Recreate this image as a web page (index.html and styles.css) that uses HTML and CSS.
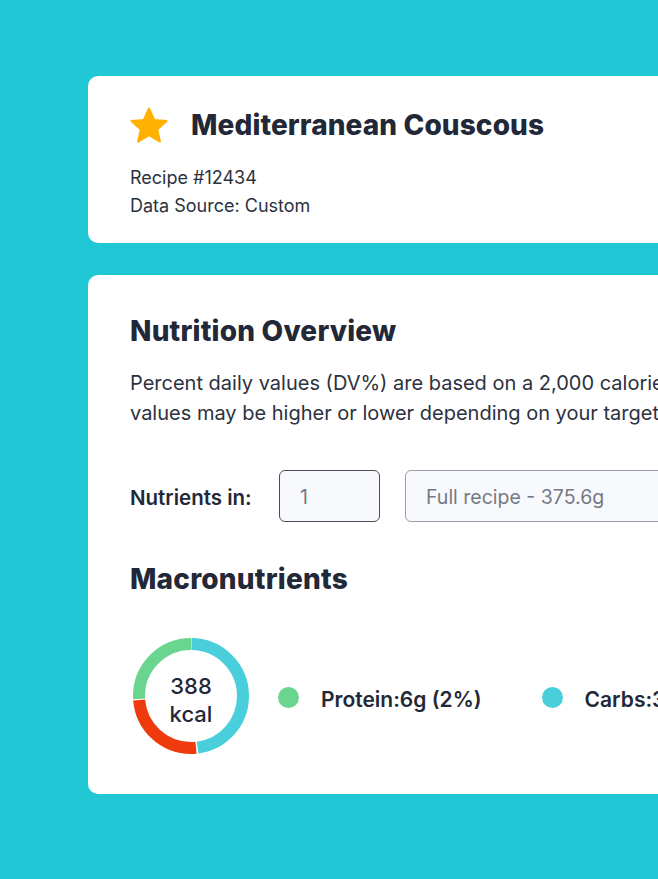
FILE: index.html
```html
<!DOCTYPE html>
<html lang="en">
<head>
<meta charset="utf-8">
<title>Mediterranean Couscous</title>
<link rel="stylesheet" href="styles.css">
</head>
<body>
<main class="stage">
  <section class="card card-header">
    <div class="title-row">
      <svg class="star" viewBox="0 0 40 40" width="40" height="40" aria-hidden="true">
        <path d="M20 2.5 L25.2 14 L37.6 15.1 L28.2 23.4 L31 35.6 L20 29.2 L9 35.6 L11.8 23.4 L2.4 15.1 L14.8 14 Z" fill="#FFB000" stroke="#FFB000" stroke-width="2" stroke-linejoin="round"/>
      </svg>
      <h1 class="title">Mediterranean Couscous</h1>
    </div>
    <p class="meta">Recipe #12434</p>
    <p class="meta">Data Source: Custom</p>
  </section>

  <section class="card card-nutrition">
    <h2 class="heading">Nutrition Overview</h2>
    <p class="desc">
      <span class="line">Percent daily values (DV%) are based on a 2,000 calorie</span>
      <span class="line">values may be higher or lower depending on your target</span>
    </p>
    <div class="nutrients-row">
      <span class="label">Nutrients in:</span>
      <div class="field field-qty">1</div>
      <div class="field field-unit">Full recipe - 375.6g</div>
    </div>
    <h2 class="heading heading-macro">Macronutrients</h2>
    <div class="macro-row">
      <div class="donut">
        <svg viewBox="0 0 116 116" width="116" height="116" aria-hidden="true">
          <g transform="rotate(-90 58 58)" fill="none" stroke-width="12">
            <circle cx="58" cy="58" r="52" stroke="#48CFDB" stroke-dasharray="156 170.7" stroke-dashoffset="-0.5"/>
            <circle cx="58" cy="58" r="52" stroke="#EE3A0C" stroke-dasharray="82.5 244.2" stroke-dashoffset="-158"/>
            <circle cx="58" cy="58" r="52" stroke="#6AD58E" stroke-dasharray="84.5 242.2" stroke-dashoffset="-241.7"/>
          </g>
        </svg>
        <div class="donut-label"><span>388</span><span>kcal</span></div>
      </div>
      <div class="legend-item">
        <span class="dot dot-green"></span>
        <span class="legend-text">Protein:6g (2%)</span>
      </div>
      <div class="legend-item">
        <span class="dot dot-teal"></span>
        <span class="legend-text">Carbs:36g</span>
      </div>
    </div>
  </section>
</main>
</body>
</html>
```

FILE: styles.css
```css
html, body {
  margin: 0;
  padding: 0;
}
body {
  background: #20C8D6;
  font-family: Inter, "Noto Sans", sans-serif;
  color: #232838;
  width: 658px;
  height: 879px;
  overflow: hidden;
}
.stage {
  padding: 76px 0 0 88px;
  display: flex;
  flex-direction: column;
  gap: 32px;
}
.card {
  background: #ffffff;
  border-radius: 10px;
  width: 760px;
  box-sizing: border-box;
  padding-left: 42px;
}
.card-header {
  height: 167px;
  padding-top: 30px;
}
.title-row {
  display: flex;
  align-items: center;
  gap: 22px;
  height: 40px;
  margin-left: -1px;
}
.star {
  display: block;
  flex: none;
}
.title {
  margin: -3px 0 0;
  font-size: 28px;
  font-weight: 800;
  letter-spacing: 0.1px;
  line-height: 34px;
}
.meta {
  margin: 0;
  font-size: 18px;
  line-height: 28px;
  font-weight: 400;
  color: #2c3140;
}
.title-row + .meta {
  margin-top: 18px;
}
.card-nutrition {
  height: 519px;
  padding-top: 39px;
}
.heading {
  margin: 0;
  font-size: 28px;
  font-weight: 800;
  letter-spacing: 0.2px;
  line-height: 34px;
}
.desc {
  margin: 20px 0 0;
  font-size: 20px;
  line-height: 30px;
  color: #2c3140;
}
.desc .line {
  display: block;
  white-space: nowrap;
}
.nutrients-row {
  margin-top: 42px;
  display: flex;
  align-items: center;
  height: 52px;
}
.label {
  font-size: 20.5px;
  font-weight: 600;
  width: 149px;
  flex: none;
  padding-top: 2px;
}
.field {
  box-sizing: border-box;
  height: 52px;
  border-radius: 6px;
  background: #F8F9FC;
  display: flex;
  align-items: center;
  padding-left: 20px;
  padding-top: 2px;
  font-size: 19.5px;
  color: #757985;
}
.field-qty {
  width: 101px;
  border: 1px solid #4a4e5a;
  margin-right: 25px;
}
.field-unit {
  width: 300px;
  border: 1px solid #9a9ea8;
}
.heading-macro {
  margin-top: 40px;
}
.macro-row {
  margin-top: 42px;
  display: flex;
  align-items: center;
}
.donut {
  position: relative;
  width: 116px;
  height: 116px;
  margin-left: 3px;
  flex: none;
}
.donut svg {
  display: block;
}
.donut-label {
  position: absolute;
  inset: 0;
  display: flex;
  flex-direction: column;
  align-items: center;
  justify-content: center;
  font-size: 22px;
  font-weight: 500;
  line-height: 28px;
  padding-top: 7px;
  box-sizing: border-box;
}
.legend-item {
  display: flex;
  align-items: center;
  flex: none;
  margin-left: 29px;
  padding-top: 6px;
}
.legend-item + .legend-item {
  margin-left: 60px;
}
.dot {
  width: 21px;
  height: 21px;
  border-radius: 50%;
  margin-right: 22px;
  margin-top: -3px;
}
.dot-green { background: #6AD58E; }
.dot-teal { background: #48CFDB; }
.legend-text {
  font-size: 21px;
  font-weight: 600;
  white-space: nowrap;
}
```
